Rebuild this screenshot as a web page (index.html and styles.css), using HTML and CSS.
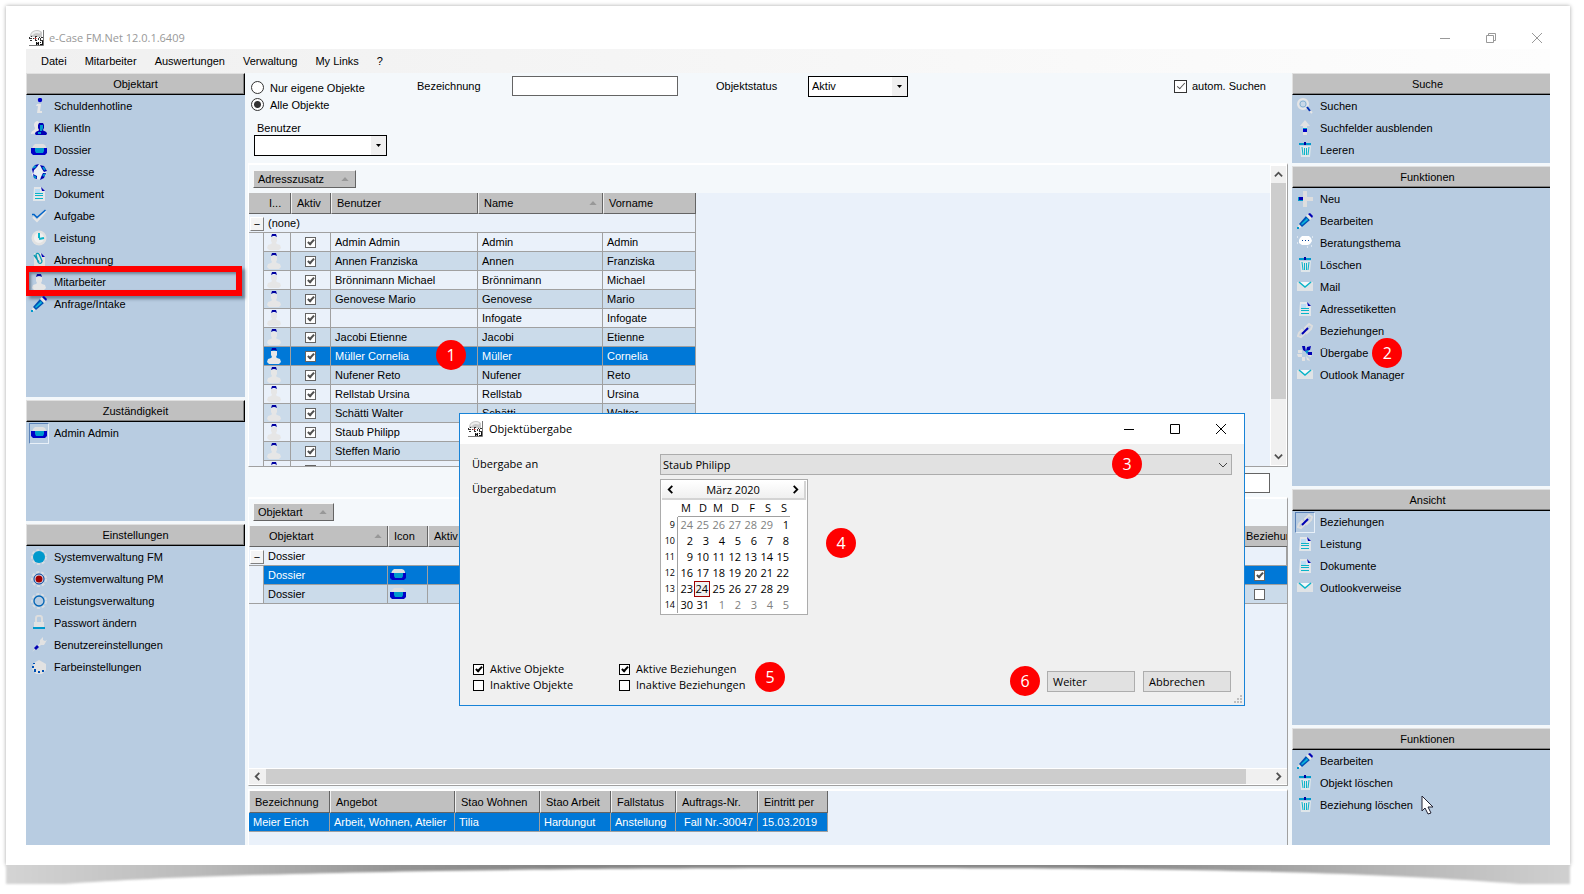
FILE: index.html
```html
<!DOCTYPE html>
<html lang="de">
<head>
<meta charset="utf-8">
<title>e-Case FM.Net</title>
<link rel="stylesheet" href="styles.css">
</head>
<body>

<!-- icons -->
<svg class="defs" aria-hidden="true">
	<linearGradient id="shade" x1="0" x2="1"><stop offset="0" stop-color="#d4d4d4"/><stop offset=".12" stop-color="#bbb"/><stop offset=".25" stop-color="#949494"/><stop offset=".35" stop-color="#868686"/><stop offset=".7" stop-color="#868686"/><stop offset=".88" stop-color="#b4b4b4"/><stop offset="1" stop-color="#d0d0d0"/></linearGradient>
	<symbol id="logo" viewBox="0 0 16 16"><path d="M1 7a7 6.500 0 0 1 12-5v5z" fill="#c9c9c9"/><path d="M3 5a5 4 0 0 1 8-2" stroke="#eee" stroke-width="2" fill="none"/><path d="M14.500 0v15.500H0" stroke="#777" fill="none"/><path d="M0 8.500h3M0 7.500h1M2 6.500h1M1 10.500h2M4 8.500h1M6 6.500h2M6.500 7v3M6 10.500h2M9.500 8v2M11.500 8v3M10 7.500h1M12 7.500h2M12 10.500h2" stroke="#333" fill="none"/><path d="M5.500 8.500h2" stroke="#c33"/><path d="M7.500 15v-3l2 3v-3M11 12.500h1M11 14.500h2M13.500 11v4" stroke="#111" fill="none"/></symbol>
	<symbol id="info" viewBox="0 0 16 16"><circle cx="9" cy="2" r="2.200" fill="#0000c8"/><path d="M6 6h4l-1 7 2 0v2H6l1-7H5z" fill="#e6e6e6"/></symbol>
	<symbol id="client" viewBox="0 0 16 16"><path d="M0 14c0-4 4-3 4-6-2-3-1-7 3-7l2 3-1 9z" fill="#e6e6e6"/><path d="M8 3h4l1 2v3l-1 2c0 1 4 1 4 4l-1 1H5l-1-1c0-3 4-3 4-4L7 8V5z" fill="#0000b4"/><path d="M9 5h3v3l-1 3H9zM7 12h3v2H7z" fill="#09c"/></symbol>
	<symbol id="dossier" viewBox="0 0 16 16"><path d="M2 4l2-2h8l2 1 1 2v2H1z" fill="#e0e0e0"/><path d="M0 6h16v5l-2 2H2l-2-2z" fill="#0000c8"/><path d="M4 6h9v3l-1 2H5L4 9z" fill="#09c"/></symbol>
	<symbol id="globe" viewBox="0 0 16 16"><circle cx="8" cy="8" r="7.500" fill="#e9eef3"/><path d="M1 5l3-4 4-1-2 3-3 3-1 4zM9 1l4 1 3 5-3 1-2-3zM12 9l3 0-2 5-4 2 1-3zM2 10l4 2 0 3-3-1z" fill="#0000b4"/><path d="M2 4l3-2M12 3l2 3M12 12l2-2M3 12l2 2" stroke="#09c" stroke-width="2"/></symbol>
	<symbol id="doc" viewBox="0 0 16 16"><path d="M3 1h7l4 4v10H2z" fill="#e2e6ea"/><path d="M4 3h5v4H4z" fill="#bcdcf4"/><path d="M10 1l4 4h-3z" fill="#0000b4"/><path d="M4 7.500h8M4 9.500h8M4 12.500h8" stroke="#09b4c8"/></symbol>
	<symbol id="check" viewBox="0 0 16 16"><path d="M2 9l4 4 9-10" stroke="#e6e6e6" stroke-width="2" fill="none"/><path d="M1 6.500h2l3 3L14.500 2" stroke="#0064c8" stroke-width="1.500" fill="none"/></symbol>
	<symbol id="clock" viewBox="0 0 16 16"><circle cx="8" cy="8" r="7.500" fill="#e2e2e2"/><circle cx="8" cy="8" r="5" fill="#f0f0f0"/><path d="M8 3v5M13 8L8 9" stroke="#09b4c8" stroke-width="2"/></symbol>
	<symbol id="clip" viewBox="0 0 16 16"><path d="M3 1h7l4 4v10H3z" fill="#e2e2e2"/><path d="M10 1l4 4h-3z" fill="#0000b4"/><path d="M3 3l5 7M8 2l3 7c0 3-3 3-4 1L5 3c0-2 2-2 3-1" stroke="#0a9ab4" stroke-width="1.300" fill="none"/></symbol>
	<symbol id="person" viewBox="0 0 16 16"><path d="M5 3h6v4l-1 2 1 1 3 1 1 3-2 2H3l-2-2 1-3 3-1 1-1-1-2z" fill="#e6e6e6"/><path d="M5 3l1-3h4l1 3-2-1H7z" fill="#0000a0"/></symbol>
	<symbol id="pencil" viewBox="0 0 16 16"><path d="M0 16l2-5 3 3z" fill="#e6e6e6"/><path d="M0 14h2v2H0z" fill="#09c"/><path d="M2 11L9 3l4 4-8 7z" fill="#0050b4"/><path d="M4 11l6-6 1 2-6 5z" fill="#09b4dc"/><path d="M9 3l2-2 4 4-2 2z" fill="#e6e6e6"/><path d="M11 1l2-1 3 3-1 2z" fill="#0000b4"/></symbol>
	<symbol id="gearblue" viewBox="0 0 16 16"><circle cx="8" cy="8" r="7" fill="none" stroke="#d8dde2" stroke-width="2" stroke-dasharray="3 2"/><circle cx="8" cy="8" r="6" fill="#09c"/></symbol>
	<symbol id="gearred" viewBox="0 0 16 16"><circle cx="8" cy="8" r="7" fill="none" stroke="#d8dde2" stroke-width="2" stroke-dasharray="3 2"/><circle cx="8" cy="8" r="5" fill="#e6e6f0" stroke="#003c96"/><circle cx="8" cy="8" r="3.500" fill="#a00000"/></symbol>
	<symbol id="gear" viewBox="0 0 16 16"><circle cx="8" cy="8" r="7" fill="none" stroke="#d8dde2" stroke-width="2" stroke-dasharray="3 2"/><circle cx="8" cy="8" r="5" fill="none" stroke="#0064b4" stroke-width="1.300"/></symbol>
	<symbol id="lock" viewBox="0 0 16 16"><path d="M5 8V3c0-3 6-3 6 0v5" stroke="#dedede" stroke-width="2" fill="none"/><path d="M3 7h10v7H3z" fill="#e2e2e2"/><path d="M2 12h12v2H2z" fill="#09c"/></symbol>
	<symbol id="wrench" viewBox="0 0 16 16"><path d="M1 15l8-9V3l3-3v3l2 1 2-1-3 5h-3z" fill="#e2e2e2"/><path d="M3 11l3-3 2 2-3 3z" fill="#0000b4"/></symbol>
	<symbol id="palette" viewBox="0 0 16 16"><path d="M8 1l7 4v6l-4 4H5l-4-5 2-6z" fill="#e2e2e2"/><path d="M1 7h2v2H1zM3 10h2v3H3zM7 12h2v2H7zM11 11h2v2h-2zM2 4h2v1H2z" fill="#0050b4"/></symbol>
	<symbol id="lens" viewBox="0 0 16 16"><circle cx="6" cy="6" r="5" fill="#c9d8e8" stroke="#e6e6e6" stroke-width="2"/><circle cx="6" cy="6" r="3" fill="none" stroke="#8ab4d2"/><path d="M10 10l5 5" stroke="#e6e6e6" stroke-width="2"/><path d="M10 9l3 4" stroke="#0032b4" stroke-width="2"/></symbol>
	<symbol id="up" viewBox="0 0 16 16"><path d="M8 0l5 6h-3v9H6V6H3z" fill="#e2e2e2"/><path d="M6 8h4v4H6z" fill="#0000c8"/><path d="M6 8h4v1H6z" fill="#09c"/></symbol>
	<symbol id="bin" viewBox="0 0 16 16"><path d="M3 4h11l-1 11H4z" fill="#dfe6ea"/><path d="M2 1h12v2H2z" fill="#09c"/><path d="M7 0h2v3H7z" fill="#0000a0"/><path d="M5 5l1 8M7.500 6v7M9.500 6v7M12 5l-1 8" stroke="#0ab4c8"/></symbol>
	<symbol id="plus" viewBox="0 0 16 16"><path d="M6 0h4v6h6v4h-6v6H6v-6H1V6h5z" fill="#dedede"/><path d="M1 6h5v4H1z" fill="#09c"/><path d="M2 6h4v3H2z" fill="#0000b4"/></symbol>
	<symbol id="speech" viewBox="0 0 16 16"><path d="M3 3l2-2h7l2 2 1 3-2 3-2 1H5L2 8V5z" fill="#fff"/><path d="M5 5.500h1M8 5.500h1M11 5.500h1" stroke="#003c96"/><path d="M0 2h1M0 8h1M10 12h1M14 11h1M15 2h1" stroke="#fff"/></symbol>
	<symbol id="mail" viewBox="0 0 16 16"><path d="M0 3h16v9H0z" fill="#dfe3e6"/><path d="M3 3h11L9 7H7z" fill="#f4f8fb"/><path d="M2 3l6 5 6-5" stroke="#09b4c8" stroke-width="1.500" fill="none"/></symbol>
	<symbol id="link" viewBox="0 0 16 16"><path d="M2 10l3-3 3 3-4 4-3-1zM8 5l4-4 3 2-1 3-4 4z" fill="none" stroke="#dedede" stroke-width="2"/><path d="M5 11l6-6" stroke="#0000b4" stroke-width="2"/></symbol>
	<symbol id="flower" viewBox="0 0 16 16"><path d="M1 5h4v3H1zM0 9h5v3H1zM5 12h3v4H5zM9 11l3 3 1 2-3-1zM10 9h5l-1 3-3-1z" fill="#e2e2e2"/><path d="M5 1l3 0 1 6-3-2zM9 6l1-4 4-1-1 4zM10 7h5v3h-4z" fill="#0000b4"/><path d="M8 6l4-1-2 4z" fill="#09c"/></symbol>
	<symbol id="dn" viewBox="0 0 7 4"><path d="M1 0h5L3.500 3z"/></symbol>
	<symbol id="sort" viewBox="0 0 9 5"><path d="M0 5L4.500 0 9 5z"/></symbol>
	<symbol id="chev" viewBox="0 0 10 10"><path d="M1 7l4-4 4 4" fill="none" stroke="currentColor" stroke-width="2"/></symbol>
	<symbol id="thin" viewBox="0 0 10 10"><path d="M1 3l4 4 4-4" fill="none" stroke="currentColor"/></symbol>
	<symbol id="min" viewBox="0 0 12 12"><path d="M1 6.500h10" stroke="currentColor"/></symbol>
	<symbol id="max" viewBox="0 0 12 12"><path d="M1.500 1.500h9v9h-9z" fill="none" stroke="currentColor"/></symbol>
	<symbol id="restore" viewBox="0 0 12 12"><path d="M1.500 3.500h7v7h-7zM3.500 3V1.500h7v7H9" fill="none" stroke="currentColor"/></symbol>
	<symbol id="close" viewBox="0 0 12 12"><path d="M1 1l10 10M11 1L1 11" stroke="currentColor"/></symbol>
</svg>

<div class="sheet">
<div class="app">

	<header class="titlebar">
		<svg class="icon"><use href="#logo"/></svg>
		<h1>e-Case FM.Net 12.0.1.6409</h1>
		<div class="winbtns">
			<button aria-label="Minimieren"><svg><use href="#min"/></svg></button>
			<button aria-label="Wiederherstellen"><svg><use href="#restore"/></svg></button>
			<button aria-label="Schliessen"><svg><use href="#close"/></svg></button>
		</div>
	</header>

	<nav class="menu">
		<a href="#">Datei</a>
		<a href="#">Mitarbeiter</a>
		<a href="#">Auswertungen</a>
		<a href="#">Verwaltung</a>
		<a href="#">My Links</a>
		<a href="#">?</a>
	</nav>

	<div class="main">

		<!-- linke Spalte -->
		<aside class="side left">
			<section class="panel objektart">
				<h2>Objektart</h2>
				<a href="#"><svg class="icon"><use href="#info"/></svg><span>Schuldenhotline</span></a>
				<a href="#"><svg class="icon"><use href="#client"/></svg><span>KlientIn</span></a>
				<a href="#"><svg class="icon"><use href="#dossier"/></svg><span>Dossier</span></a>
				<a href="#"><svg class="icon"><use href="#globe"/></svg><span>Adresse</span></a>
				<a href="#"><svg class="icon"><use href="#doc"/></svg><span>Dokument</span></a>
				<a href="#"><svg class="icon"><use href="#check"/></svg><span>Aufgabe</span></a>
				<a href="#"><svg class="icon"><use href="#clock"/></svg><span>Leistung</span></a>
				<a href="#"><svg class="icon"><use href="#clip"/></svg><span>Abrechnung</span></a>
				<a href="#" class="marked"><svg class="icon"><use href="#person"/></svg><span>Mitarbeiter</span></a>
				<a href="#"><svg class="icon"><use href="#pencil"/></svg><span>Anfrage/Intake</span></a>
			</section>
			<section class="panel zustaendig">
				<h2>Zuständigkeit</h2>
				<a href="#" class="pressed"><svg class="icon"><use href="#dossier"/></svg><span>Admin Admin</span></a>
			</section>
			<section class="panel rest">
				<h2>Einstellungen</h2>
				<a href="#"><svg class="icon"><use href="#gearblue"/></svg><span>Systemverwaltung FM</span></a>
				<a href="#"><svg class="icon"><use href="#gearred"/></svg><span>Systemverwaltung PM</span></a>
				<a href="#"><svg class="icon"><use href="#gear"/></svg><span>Leistungsverwaltung</span></a>
				<a href="#"><svg class="icon"><use href="#lock"/></svg><span>Passwort ändern</span></a>
				<a href="#"><svg class="icon"><use href="#wrench"/></svg><span>Benutzereinstellungen</span></a>
				<a href="#"><svg class="icon"><use href="#palette"/></svg><span>Farbeinstellungen</span></a>
			</section>
		</aside>

		<!-- Mitte -->
		<main class="center">
			<form class="filter">
				<div class="radios">
					<label><input type="radio" name="objekte"><span>Nur eigene Objekte</span></label>
					<label><input type="radio" name="objekte" checked><span>Alle Objekte</span></label>
				</div>
				<label for="bez">Bezeichnung</label>
				<input type="text" id="bez">
				<label for="status">Objektstatus</label>
				<span class="combo"><select id="status"><option>Aktiv</option></select><svg><use href="#dn"/></svg></span>
				<label class="auto"><input type="checkbox" checked><span>autom. Suchen</span></label>
				<div class="user">
					<label for="user">Benutzer</label>
					<span class="combo"><select id="user"><option></option></select><svg><use href="#dn"/></svg></span>
				</div>
			</form>

			<div class="grid grid1">
				<div class="gridbody">
					<div class="groupbar"><button>Adresszusatz<svg class="sort"><use href="#sort"/></svg></button></div>
					<table class="people">
						<colgroup><col class="c15"><col class="c27"><col class="c40"><col class="c147"><col class="c125"><col class="c93"></colgroup>
						<thead><tr><th colspan="2" class="ico">I...</th><th>Aktiv</th><th>Benutzer</th><th>Name<svg class="sort"><use href="#sort"/></svg></th><th>Vorname</th></tr></thead>
						<tbody>
						<tr class="group"><td colspan="6"><button>−</button>(none)</td></tr>
						<tr><td></td><td><svg class="icon"><use href="#person"/></svg></td><td><input type="checkbox" aria-label="Aktiv" checked></td><td>Admin Admin</td><td>Admin</td><td>Admin</td></tr>
						<tr class="alt"><td></td><td><svg class="icon"><use href="#person"/></svg></td><td><input type="checkbox" aria-label="Aktiv" checked></td><td>Annen Franziska</td><td>Annen</td><td>Franziska</td></tr>
						<tr><td></td><td><svg class="icon"><use href="#person"/></svg></td><td><input type="checkbox" aria-label="Aktiv" checked></td><td>Brönnimann Michael</td><td>Brönnimann</td><td>Michael</td></tr>
						<tr class="alt"><td></td><td><svg class="icon"><use href="#person"/></svg></td><td><input type="checkbox" aria-label="Aktiv" checked></td><td>Genovese Mario</td><td>Genovese</td><td>Mario</td></tr>
						<tr><td></td><td><svg class="icon"><use href="#person"/></svg></td><td><input type="checkbox" aria-label="Aktiv" checked></td><td></td><td>Infogate</td><td>Infogate</td></tr>
						<tr class="alt"><td></td><td><svg class="icon"><use href="#person"/></svg></td><td><input type="checkbox" aria-label="Aktiv" checked></td><td>Jacobi Etienne</td><td>Jacobi</td><td>Etienne</td></tr>
						<tr class="sel"><td></td><td><svg class="icon"><use href="#person"/></svg></td><td><input type="checkbox" aria-label="Aktiv" checked></td><td>Müller Cornelia<b class="badge b1">1</b></td><td>Müller</td><td>Cornelia</td></tr>
						<tr class="alt"><td></td><td><svg class="icon"><use href="#person"/></svg></td><td><input type="checkbox" aria-label="Aktiv" checked></td><td>Nufener Reto</td><td>Nufener</td><td>Reto</td></tr>
						<tr><td></td><td><svg class="icon"><use href="#person"/></svg></td><td><input type="checkbox" aria-label="Aktiv" checked></td><td>Rellstab Ursina</td><td>Rellstab</td><td>Ursina</td></tr>
						<tr class="alt"><td></td><td><svg class="icon"><use href="#person"/></svg></td><td><input type="checkbox" aria-label="Aktiv" checked></td><td>Schätti Walter</td><td>Schätti</td><td>Walter</td></tr>
						<tr><td></td><td><svg class="icon"><use href="#person"/></svg></td><td><input type="checkbox" aria-label="Aktiv" checked></td><td>Staub Philipp</td><td>Staub</td><td>Philipp</td></tr>
						<tr class="alt"><td></td><td><svg class="icon"><use href="#person"/></svg></td><td><input type="checkbox" aria-label="Aktiv" checked></td><td>Steffen Mario</td><td>Steffen</td><td>Mario</td></tr>
						<tr><td></td><td><svg class="icon"><use href="#person"/></svg></td><td><input type="checkbox" aria-label="Aktiv" checked></td><td>Suter Manuel</td><td></td><td></td></tr>
						</tbody>
					</table>
				</div>
				<div class="vscroll">
					<svg><use href="#chev"/></svg>
					<div class="thumb"></div>
					<svg class="down"><use href="#chev"/></svg>
				</div>
			</div>

			<div class="between"><input type="text" aria-label="Filter"></div>

			<div class="grid grid2">
				<div class="groupbar"><button>Objektart<svg class="sort"><use href="#sort"/></svg></button></div>
				<table class="links">
					<colgroup><col class="c15"><col class="c124"><col class="c40"><col class="c40"><col><col class="c44"></colgroup>
					<thead><tr><th colspan="2" class="obj">Objektart<svg class="sort"><use href="#sort"/></svg></th><th>Icon</th><th>Aktiv</th><th></th><th class="bez">Beziehungen</th></tr></thead>
					<tbody>
					<tr class="group"><td colspan="6"><button>−</button>Dossier</td></tr>
					<tr class="sel"><td></td><td>Dossier</td><td><svg class="icon"><use href="#dossier"/></svg></td><td></td><td></td><td class="chk"><input type="checkbox" aria-label="Beziehung" checked></td></tr>
					<tr class="alt"><td></td><td>Dossier</td><td><svg class="icon"><use href="#dossier"/></svg></td><td></td><td></td><td class="chk"><input type="checkbox" aria-label="Beziehung"></td></tr>
					</tbody>
				</table>
				<div class="hscroll">
					<svg class="prev"><use href="#chev"/></svg>
					<div class="thumb"></div>
					<svg class="next"><use href="#chev"/></svg>
				</div>
			</div>

			<div class="grid grid3">
				<table class="cases">
					<colgroup><col class="c81"><col class="c125"><col class="c85"><col class="c71"><col class="c65"><col class="c82"><col class="c70"></colgroup>
					<thead><tr><th>Bezeichnung</th><th>Angebot</th><th>Stao Wohnen</th><th>Stao Arbeit</th><th>Fallstatus</th><th>Auftrags-Nr.</th><th>Eintritt per</th></tr></thead>
					<tbody><tr class="sel"><td>Meier Erich</td><td>Arbeit, Wohnen, Atelier</td><td>Tilia</td><td>Hardungut</td><td>Anstellung</td><td class="num">Fall Nr.-30047</td><td>15.03.2019</td></tr></tbody>
				</table>
			</div>
		</main>

		<!-- rechte Spalte -->
		<aside class="side right">
			<section class="panel suche">
				<h2>Suche</h2>
				<a href="#"><svg class="icon"><use href="#lens"/></svg><span>Suchen</span></a>
				<a href="#"><svg class="icon"><use href="#up"/></svg><span>Suchfelder ausblenden</span></a>
				<a href="#"><svg class="icon"><use href="#bin"/></svg><span>Leeren</span></a>
			</section>
			<section class="panel funktionen">
				<h2>Funktionen</h2>
				<a href="#"><svg class="icon"><use href="#plus"/></svg><span>Neu</span></a>
				<a href="#"><svg class="icon"><use href="#pencil"/></svg><span>Bearbeiten</span></a>
				<a href="#"><svg class="icon"><use href="#speech"/></svg><span>Beratungsthema</span></a>
				<a href="#"><svg class="icon"><use href="#bin"/></svg><span>Löschen</span></a>
				<a href="#"><svg class="icon"><use href="#mail"/></svg><span>Mail</span></a>
				<a href="#"><svg class="icon"><use href="#doc"/></svg><span>Adressetiketten</span></a>
				<a href="#"><svg class="icon"><use href="#link"/></svg><span>Beziehungen</span></a>
				<a href="#"><svg class="icon"><use href="#flower"/></svg><span>Übergabe<b class="badge b2">2</b></span></a>
				<a href="#"><svg class="icon"><use href="#mail"/></svg><span>Outlook Manager</span></a>
			</section>
			<section class="panel ansicht">
				<h2>Ansicht</h2>
				<a href="#" class="pressed"><svg class="icon"><use href="#link"/></svg><span>Beziehungen</span></a>
				<a href="#"><svg class="icon"><use href="#doc"/></svg><span>Leistung</span></a>
				<a href="#"><svg class="icon"><use href="#doc"/></svg><span>Dokumente</span></a>
				<a href="#"><svg class="icon"><use href="#mail"/></svg><span>Outlookverweise</span></a>
			</section>
			<section class="panel rest">
				<h2>Funktionen</h2>
				<a href="#"><svg class="icon"><use href="#pencil"/></svg><span>Bearbeiten</span></a>
				<a href="#"><svg class="icon"><use href="#bin"/></svg><span>Objekt löschen</span></a>
				<a href="#"><svg class="icon"><use href="#bin"/></svg><span>Beziehung löschen
					<svg class="cursor" viewBox="0 0 13 20"><path d="M1 1v15l3-3 3 6 3-1-3-6h5z" fill="#fff" stroke="#223"/></svg></span></a>
			</section>
		</aside>
	</div>

	<!-- Dialog Objektübergabe -->
	<div class="dialog" role="dialog" aria-labelledby="dlgtitle">
		<div class="dlgtitle">
			<svg class="icon"><use href="#logo"/></svg>
			<h2 id="dlgtitle">Objektübergabe</h2>
			<div class="winbtns">
				<button aria-label="Minimieren"><svg><use href="#min"/></svg></button>
				<button aria-label="Maximieren"><svg><use href="#max"/></svg></button>
				<button aria-label="Schliessen"><svg><use href="#close"/></svg></button>
			</div>
		</div>
		<div class="fields">
			<label for="an">Übergabe an</label>
			<span class="combo flat"><select id="an"><option>Staub Philipp</option></select><svg><use href="#thin"/></svg><b class="badge b3">3</b></span>
			<span class="lbl">Übergabedatum</span>
			<div class="calendar">
				<div class="month">
					<button aria-label="Zurück"><svg class="prev"><use href="#chev"/></svg></button>
					<span>März 2020</span>
					<button aria-label="Vor"><svg class="next"><use href="#chev"/></svg></button>
				</div>
				<table>
					<thead><tr><th></th><th>M</th><th>D</th><th>M</th><th>D</th><th>F</th><th>S</th><th>S</th></tr></thead>
					<tbody>
					<tr><th>9</th><td class="off">24</td><td class="off">25</td><td class="off">26</td><td class="off">27</td><td class="off">28</td><td class="off">29</td><td>1</td></tr>
					<tr><th>10</th><td>2</td><td>3</td><td>4</td><td>5</td><td>6</td><td>7</td><td>8</td></tr>
					<tr><th>11</th><td>9</td><td>10</td><td>11</td><td>12</td><td>13</td><td>14</td><td>15</td></tr>
					<tr><th>12</th><td>16</td><td>17</td><td>18</td><td>19</td><td>20</td><td>21</td><td>22</td></tr>
					<tr><th>13</th><td>23</td><td class="today">24</td><td>25</td><td>26</td><td>27</td><td>28</td><td>29</td></tr>
					<tr><th>14</th><td>30</td><td>31</td><td class="off">1</td><td class="off">2</td><td class="off">3</td><td class="off">4</td><td class="off">5</td></tr>
					</tbody>
				</table>
				<b class="badge b4">4</b>
			</div>
		</div>
		<div class="dlgfoot">
			<div class="checks">
				<label><input type="checkbox" checked><span>Aktive Objekte</span></label>
				<label><input type="checkbox"><span>Inaktive Objekte</span></label>
			</div>
			<div class="checks">
				<label><input type="checkbox" checked><span>Aktive Beziehungen</span></label>
				<label><input type="checkbox"><span>Inaktive Beziehungen</span></label>
				<b class="badge b5">5</b>
			</div>
			<div class="btns">
				<b class="badge b6">6</b>
				<button>Weiter</button>
				<button>Abbrechen</button>
			</div>
		</div>
		<svg class="grip" viewBox="0 0 8 8"><path d="M6 0h2v2H6zM3 3h2v2H3zM6 3h2v2H6zM0 6h2v2H0zM3 6h2v2H3zM6 6h2v2H6z" fill="#bfbfbf"/></svg>
	</div>

</div>
</div>
<svg class="lift" viewBox="0 0 1584 29" preserveAspectRatio="none"><path d="M6-8V19H65C190 10 400 4 800 3S1390 8 1520 19H1570V-8z" fill="url(#shade)"/></svg>

</body>
</html>
```

FILE: styles.css
```css
*{
	box-sizing: border-box;
}
body{
	margin: 0;
	height: 100vh;
	min-height: 760px;
	display: flex;
	flex-direction: column;
	background: #fff;
	color: #000;
	font: 11px/16px "Liberation Sans", Arial, sans-serif;
}
h1, h2{
	margin: 0;
	font-size: inherit;
	font-weight: normal;
}
a{
	color: inherit;
	text-decoration: none;
}
button, input, select{
	font: inherit;
	color: inherit;
	margin: 0;
	padding: 0;
	border-radius: 0;
}
svg{
	display: block;
}
.defs{
	position: absolute;
	width: 0;
	height: 0;
}
.icon{
	width: 16px;
	height: 16px;
	flex: none;
}
.sheet{
	flex: 1;
	min-height: 0;
	display: flex;
	margin: 6px 14px 0 6px;
	padding: 20px;
	background: #fff;
	box-shadow: 0 0 4px rgba(0,0,0,.35);
	position: relative;
}
.lift{
	flex: none;
	width: 100%;
	height: 29px;
	overflow: hidden;
	position: relative;
}
.lift path{
	filter: blur(1px);
}
.app{
	flex: 1;
	min-width: 0;
	display: flex;
	flex-direction: column;
	position: relative;
}

/* Titel + Menü */
.titlebar{
	display: flex;
	align-items: center;
	height: 23px;
	padding-left: 3px;
	color: #999;
	font: 11px/16px "Open Sans", sans-serif;
}
.titlebar h1{
	margin-left: 4px;
}
.winbtns{
	display: flex;
	margin-left: auto;
}
.winbtns button{
	width: 46px;
	height: 20px;
	display: flex;
	align-items: center;
	justify-content: center;
	border: 0;
	background: none;
}
.winbtns svg{
	width: 12px;
	height: 12px;
}
.titlebar .winbtns{
	margin-right: -10px;
}
.menu{
	display: flex;
	align-items: center;
	gap: 18px;
	height: 24px;
	padding-left: 15px;
	background: linear-gradient(90deg, #f0f0f0, #fdfdfd);
}

/* Seitenleisten */
.main{
	flex: 1;
	min-height: 0;
	display: flex;
	background: #f4f8fb;
}
.side{
	flex: none;
	display: flex;
	flex-direction: column;
	gap: 3px;
}
.left{
	width: 219px;
}
.right{
	width: 258px;
}
.panel{
	background: #b8cce1;
}
.panel h2{
	height: 22px;
	line-height: 20px;
	text-align: center;
	background: #c0c0c0;
	border: 1px solid #e0e0e0;
	border-right-color: #000;
	border-bottom-color: #000;
	box-shadow: inset -1px -1px #808080;
}
.right .panel h2{
	border-right: 0;
	box-shadow: inset 0 -1px #808080;
	padding-left: 12px;
}
.panel a{
	display: flex;
	align-items: center;
	height: 22px;
	padding-left: 5px;
	position: relative;
}
.panel a span{
	margin-left: 7px;
	position: relative;
}
.panel .pressed::before{
	content: "";
	position: absolute;
	left: 3px;
	top: 1px;
	width: 18px;
	height: 19px;
	border: 1px solid #e8f0f8;
	border-left-color: #5a82b8;
	border-top-color: #5a82b8;
}
.panel .marked::before{
	content: "";
	box-sizing: border-box;
	position: absolute;
	left: 0;
	right: 3px;
	top: -5px;
	height: 30px;
	border: 6px solid #f00;
	border-left-width: 3px;
	box-shadow: 3px 3px 3px rgba(60,80,100,.6), inset 2px 2px 3px rgba(60,80,100,.6);
}
.objektart{
	height: 324px;
}
.zustaendig{
	height: 121px;
}
.suche{
	height: 90px;
}
.funktionen{
	height: 320px;
}
.ansicht{
	height: 236px;
}
.rest{
	flex: 1;
}

/* Filter */
.center{
	flex: 1;
	min-width: 0;
	display: flex;
	flex-direction: column;
	padding: 0 4px 0 3px;
}
.filter{
	height: 90px;
	padding: 3px 22px 0 3px;
	display: grid;
	grid-template-columns: 166px 95px 204px 92px 100px 1fr;
	grid-template-rows: 20px 39px;
	align-items: center;
}
.filter > input{
	width: 166px;
	height: 20px;
	background: #fff;
	border: 1px solid #646464;
}
.radios{
	align-self: start;
	padding-top: 3px;
}
.radios label{
	display: flex;
	align-items: center;
	height: 17px;
}
.radios span{
	margin-left: 6px;
}
.radios input{
	appearance: none;
	width: 13px;
	height: 13px;
	border: 1px solid #333;
	border-radius: 50%;
	background: #fff;
}
.radios input:checked{
	background: radial-gradient(circle, #333 3px, #fff 4px);
}
.auto{
	justify-self: end;
	display: flex;
	align-items: center;
}
.auto span{
	margin-left: 5px;
}
.user{
	grid-column: 1 / -1;
	align-self: start;
	padding: 25px 0 0 3px;
}
.user label{
	display: block;
	margin-left: 3px;
	line-height: 14px;
}
.combo{
	display: block;
	position: relative;
	height: 21px;
}
.combo select{
	appearance: none;
	width: 100%;
	height: 100%;
	padding-left: 3px;
	border: 1px solid #000;
	background: linear-gradient(#f0f0f0, #f0f0f0) right / 15px 100% no-repeat #fff;
}
.combo > svg{
	position: absolute;
	right: 5px;
	top: 9px;
	width: 7px;
	height: 4px;
	pointer-events: none;
}
.user .combo{
	width: 133px;
}
input[type=checkbox]{
	appearance: none;
	display: block;
	flex: none;
	width: 11px;
	height: 11px;
	border: 1px solid #646464;
	background: #fff;
	position: relative;
}
input[type=checkbox]:checked::after{
	content: "";
	position: absolute;
	left: 3px;
	top: 0;
	width: 2px;
	height: 5px;
	border: solid #505050;
	border-width: 0 2px 2px 0;
	transform: rotate(42deg);
}
.auto input[type=checkbox]{
	width: 13px;
	height: 13px;
	border-color: #333;
}
.auto input[type=checkbox]:checked::after{
	left: 4px;
	width: 3px;
	height: 7px;
	border-width: 0 1px 1px 0;
}

/* Tabellen */
.grid{
	background: #eaf1fa;
	border: solid;
	border-width: 2px 1px 1px;
	border-color: #fff #a0a0a0 #a0a0a0 #fff;
	overflow: hidden;
}
.grid1{
	height: 304px;
	display: flex;
	flex: none;
}
.gridbody{
	flex: 1;
	min-width: 0;
	overflow: hidden;
}
.groupbar{
	height: 28px;
	padding: 5px 0 0 4px;
	background: #f4f8fb;
}
.groupbar button{
	display: flex;
	align-items: center;
	justify-content: space-between;
	width: 103px;
	height: 18px;
	padding: 0 6px 0 4px;
	border: 1px solid #f8f8f8;
	border-right-color: #646464;
	border-bottom-color: #646464;
	background: #c0c0c0;
}
.grid2 .groupbar{
	height: 27px;
	padding-top: 4px;
}
.grid2 .groupbar button{
	width: 81px;
}
.sort{
	width: 8px;
	height: 4px;
	fill: #989898;
}
.grid table{
	table-layout: fixed;
	border-collapse: separate;
	border-spacing: 0;
	width: 447px;
}
.grid .links{
	width: 100%;
}
.grid .cases{
	width: 579px;
}
.grid th{
	height: 21px;
	padding: 0 5px;
	text-align: left;
	font-weight: normal;
	white-space: nowrap;
	overflow: hidden;
	background: #c0c0c0;
	border-left: 1px solid #f0f0f0;
	border-right: 1px solid #646464;
	border-bottom: 1px solid #646464;
}
.grid th .sort{
	float: right;
	margin: 6px 0 0;
}
.grid th.ico{
	padding-left: 20px;
	border-left: 0;
}
.grid th.obj{
	padding-left: 19px;
}
.grid th.bez{
	padding: 0 0 0 2px;
	border-right: 0;
}
.grid td{
	height: 19px;
	padding: 0 0 0 4px;
	line-height: 16px;
	white-space: nowrap;
	border-right: 1px solid #a0a0a0;
	border-bottom: 1px solid #a0a0a0;
}
.grid td .icon{
	margin-left: -2px;
}
.people td input{
	margin-left: 10px;
}
.grid .alt td{
	background: #cbdbea;
}
.grid .sel td{
	color: #fff;
	background: #0078d7;
}
.grid tr td[colspan]{
	border-bottom: 1px solid #a0a0a0;
	padding-left: 1px;
}
.people td:first-child, .links td:first-child{
	background: #eaf1fa !important;
	border-bottom: 0;
	padding: 0;
}
.links tr:last-child td:first-child{
	border-bottom: 1px solid #a0a0a0;
}
.group button{
	float: left;
	width: 14px;
	height: 14px;
	margin: 2px 4px 0 0;
	line-height: 10px;
	color: #000;
	background: #f4f4f4;
	border: 1px solid #fff;
	border-right-color: #808080;
	border-bottom-color: #808080;
}
.links .chk{
	padding-left: 11px;
	border-right: 0;
}
.cases .num{
	text-align: right;
	padding-right: 4px;
}
.c15{ width: 15px; }
.c27{ width: 27px; }
.c40{ width: 40px; }
.c44{ width: 44px; }
.c65{ width: 65px; }
.c70{ width: 70px; }
.c71{ width: 71px; }
.c81{ width: 81px; }
.c82{ width: 82px; }
.c85{ width: 85px; }
.c93{ width: 93px; }
.c124{ width: 124px; }
.c125{ width: 125px; }
.c147{ width: 147px; }

.vscroll{
	width: 17px;
	display: flex;
	flex-direction: column;
	background: #f0f0f0;
	border: 1px solid #fff;
	color: #505050;
}
.vscroll svg{
	width: 9px;
	height: 9px;
	margin: 4px 3px;
	flex: none;
}
.vscroll .thumb{
	height: 216px;
	background: #cdcdcd;
}
.vscroll .down{
	margin-top: auto;
	transform: rotate(180deg);
}
.between{
	height: 30px;
	flex: none;
	padding: 6px 18px 0 0;
}
.between input{
	display: block;
	width: 150px;
	height: 20px;
	margin-left: auto;
	background: #fff;
	border: 1px solid #646464;
}
.grid2{
	flex: 1;
	min-height: 0;
	display: flex;
	flex-direction: column;
}
.hscroll{
	display: flex;
	align-items: center;
	height: 17px;
	margin-top: auto;
	background: #f0f0f0;
	border: solid #fff;
	border-width: 1px 0;
	color: #505050;
}
.hscroll svg{
	width: 9px;
	height: 9px;
	margin: 0 4px;
}
.hscroll .thumb{
	flex: 1;
	height: 100%;
	margin-right: 24px;
	background: #cdcdcd;
}
.prev{
	transform: rotate(-90deg);
}
.next{
	transform: rotate(90deg);
}
.grid3{
	flex: none;
	height: 56px;
	margin-top: 3px;
	border-bottom: 0;
}
.grid3 th{
	height: 22px;
}

/* Dialog */
.dialog{
	position: absolute;
	left: 433px;
	top: 387px;
	width: 786px;
	height: 293px;
	display: flex;
	flex-direction: column;
	background: #f0f0f0;
	border: 1px solid #1883d7;
	font: 11px/16px "Open Sans", sans-serif;
}
.dlgtitle{
	display: flex;
	align-items: center;
	height: 30px;
	padding-left: 8px;
	background: #fff;
}
.dlgtitle h2{
	margin-left: 5px;
}
.fields{
	display: grid;
	grid-template-columns: 188px 1fr;
	row-gap: 4px;
	padding: 10px 12px 0;
}
.fields label, .lbl{
	line-height: 20px;
}
.combo.flat select{
	padding-left: 2px;
	border-color: #acacac;
	background: #e1e1e1;
}
.combo.flat > svg{
	top: 6px;
	right: 4px;
	width: 10px;
	height: 10px;
	color: #444;
}
.calendar{
	position: relative;
	width: 148px;
	height: 136px;
	padding: 1px;
	background: #fff;
	border: 1px solid #acacac;
}
.month{
	display: flex;
	align-items: center;
	justify-content: space-between;
	height: 19px;
	background: linear-gradient(#fff, #f0f0f0);
	border: solid #d4d4d4;
	border-width: 0 2px 2px 0;
}
.month button{
	padding: 0 4px;
	border: 0;
	background: none;
}
.month svg{
	width: 9px;
	height: 9px;
}
.calendar table{
	border-collapse: separate;
	border-spacing: 0;
	table-layout: fixed;
	width: 126px;
	line-height: 14px;
}
.calendar th, .calendar td{
	width: 16px;
	height: 16px;
	padding: 0;
	text-align: right;
	font-weight: normal;
}
.calendar td{
	padding-right: 1px;
}
.calendar thead th{
	height: 17px;
	padding-right: 3px;
	border-bottom: 1px solid #a0a0a0;
}
.calendar thead th:first-child{
	border: 0;
}
.calendar tbody th{
	padding-right: 2px;
	font-size: 9px;
	border-right: 1px solid #a0a0a0;
}
.calendar .off{
	color: #808080;
}
.calendar .today{
	padding-right: 1px;
	border: 1px solid #a00000;
	background: #f0f0f0;
}
.dlgfoot{
	display: flex;
	align-items: flex-start;
	margin-top: auto;
	padding: 0 13px 12px 13px;
}
.checks{
	position: relative;
	width: 146px;
	margin-top: -10px;
}
.checks label{
	display: flex;
	align-items: center;
	height: 16px;
}
.checks span{
	margin-left: 6px;
}
.checks input[type=checkbox]{
	border-color: #000;
}
.checks input[type=checkbox]:checked::after{
	border-color: #000;
}
.btns{
	position: relative;
	display: flex;
	gap: 8px;
	margin-left: auto;
}
.btns button{
	width: 88px;
	height: 21px;
	padding-left: 5px;
	text-align: left;
	background: #e1e1e1;
	border: 1px solid #adadad;
}
.grip{
	position: absolute;
	right: 2px;
	bottom: 2px;
	width: 8px;
	height: 8px;
}

/* rote Nummern */
.badge{
	position: absolute;
	width: 30px;
	height: 30px;
	border-radius: 50%;
	background: #f00;
	color: #fff;
	font: 16px/30px "Open Sans", sans-serif;
	text-align: center;
	z-index: 1;
}
.people .sel td{
	position: relative;
}
.b1{ left: 105px; top: -7px; }
.b2{ left: calc(100% + 4px); top: -7px; }
.b3{ right: 90px; top: -5px; }
.b4{ left: 165px; top: 48px; }
.b5{ left: 136px; top: 1px; }
.b6{ right: 191px; top: -5px; }
.cursor{
	position: absolute;
	left: calc(100% + 8px);
	top: -2px;
	width: 13px;
	height: 20px;
}
```
